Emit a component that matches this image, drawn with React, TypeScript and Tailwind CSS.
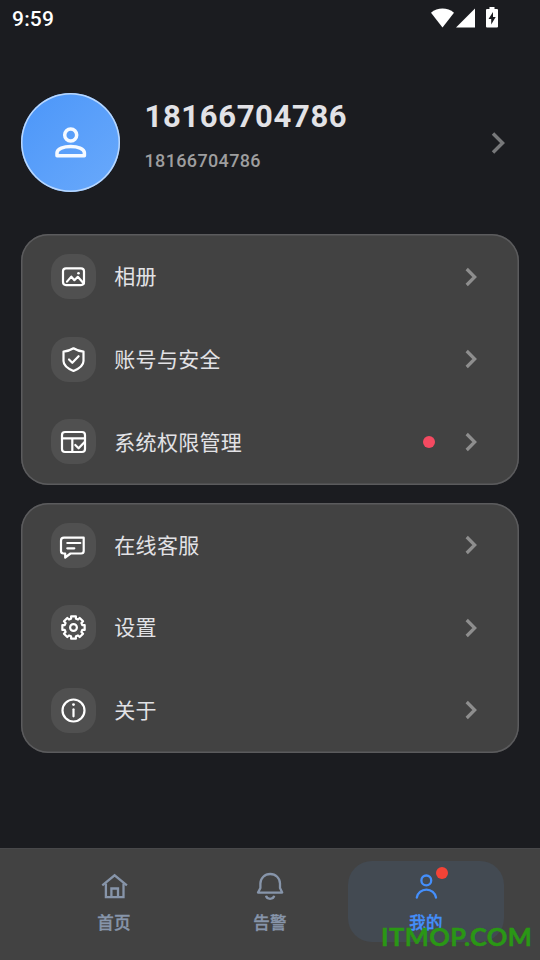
import React from "react";

type MenuItem = {
  label: string;
  icon: React.ReactNode;
  dot?: boolean;
};

type Tab = {
  label: string;
  icon: React.ReactNode;
  active?: boolean;
};

// eight-tooth outline used by the settings icon
const gearPoints = Array.from({ length: 8 })
  .flatMap((_, i) => {
    const a = (i * Math.PI) / 4 - Math.PI / 2;
    return [
      [a - 0.27, 9.1],
      [a - 0.21, 11.4],
      [a + 0.21, 11.4],
      [a + 0.27, 9.1],
    ].map(
      ([t, r]) =>
        `${(22.5 + r * Math.cos(t)).toFixed(2)},${(22.5 + r * Math.sin(t)).toFixed(2)}`
    );
  })
  .join(" ");

const RowIcon = ({ children }: { children: React.ReactNode }) => (
  <svg
    viewBox="0 0 45 45"
    className="size-[45px]"
    fill="none"
    stroke="#fff"
    strokeWidth="2.2"
    strokeLinecap="round"
    strokeLinejoin="round"
  >
    {children}
  </svg>
);

const albumItems: MenuItem[] = [
  {
    label: "相册",
    icon: (
      <RowIcon>
        <rect x="12" y="14.3" width="21" height="16.8" rx="3" />
        <path d="M16 27.6l4.3-5 3.1 3.6 3.4-3.4 6 6.6" />
        <circle cx="27.5" cy="19.2" r="1.3" fill="#fff" stroke="none" />
      </RowIcon>
    ),
  },
  {
    label: "账号与安全",
    icon: (
      <RowIcon>
        <path d="M22.5 11.3c3 1.9 6.2 3 10 3.3v9.4c0 4.5-4.3 7.6-10 10-5.7-2.4-10-5.5-10-10v-9.4c3.8-.3 7-1.4 10-3.3z" />
        <path d="M18 22.5l3.3 3.3 6.3-6.6" />
      </RowIcon>
    ),
  },
  {
    label: "系统权限管理",
    dot: true,
    icon: (
      <RowIcon>
        <rect x="11" y="13" width="23" height="20" rx="3" />
        <path d="M11 19.3h23M21.3 19.3v13.5" />
        <path d="M24.3 26l3.3 3.3 6-6.3" />
      </RowIcon>
    ),
  },
];

const serviceItems: MenuItem[] = [
  {
    label: "在线客服",
    icon: (
      <RowIcon>
        <path d="M13 14.7h19.7v13.3a2.5 2.5 0 0 1-2.5 2.5H19.5L14.2 34.5v-4H12.5a2.5 2.5 0 0 1-2.5-2.5v-10.3a3 3 0 0 1 3-3z" />
        <path d="M16.3 20h13M16.3 25.3h7" />
      </RowIcon>
    ),
  },
  {
    label: "设置",
    icon: (
      <RowIcon>
        <polygon points={gearPoints} />
        <circle cx="22.5" cy="22.5" r="3.4" />
      </RowIcon>
    ),
  },
  {
    label: "关于",
    icon: (
      <RowIcon>
        <circle cx="22.5" cy="22.5" r="11" />
        <path d="M22.5 21.3v7" />
        <circle cx="22.5" cy="16.6" r="1.4" fill="#fff" stroke="none" />
      </RowIcon>
    ),
  },
];

const tabs: Tab[] = [
  {
    label: "首页",
    icon: (
      <>
        <path d="M3.3 14.3L15.6 4.3l12.3 10" />
        <path d="M6.9 12.5v13.7h17.6V12.5" />
        <path d="M12.4 25.8v-8.3h6.6v8.3" />
      </>
    ),
  },
  {
    label: "告警",
    icon: (
      <>
        <path
          d="M3 21.6h24.2l-2.2-4.6V12.5a9.6 9.3 0 0 0-19.6 0v4.5z"
          strokeLinejoin="round"
        />
        <path d="M11 24.8a4.2 3.8 0 0 0 8.2 0" />
      </>
    ),
  },
  {
    label: "我的",
    active: true,
    icon: (
      <>
        <circle cx="15.3" cy="9.4" r="4.9" />
        <path d="M5.8 26.5a9.7 9.3 0 0 1 19.2 0" strokeLinecap="round" />
      </>
    ),
  },
];

const Chevron = () => (
  <svg
    viewBox="0 0 12 20"
    className="h-5 w-3"
    fill="none"
    stroke="#8e8e8e"
    strokeWidth="3.2"
  >
    <path d="M1.7 2l8 8-8 8" />
  </svg>
);

const MenuCard = ({ items }: { items: MenuItem[] }) => (
  <section className="flex h-[250.5px] flex-col justify-between rounded-[27px] bg-[#424242] pt-[20.1px] pr-[42px] pb-[20.2px] pl-[30px] inset-ring-[1.5px] inset-ring-[#5b5b5d]">
    {items.map((item) => (
      <div key={item.label} className="flex h-[45px] items-center">
        <div className="size-[45px] rounded-[18px] bg-[#505050]">{item.icon}</div>
        <span className="mt-[1.5px] ml-[18.3px] flex-1 text-[21px] leading-[30px] tracking-[0.3px] text-[#e2e2e6]">
          {item.label}
        </span>
        {item.dot && <span className="mr-[30px] size-3 rounded-full bg-[#f44a61]" />}
        <Chevron />
      </div>
    ))}
  </section>
);

const StatusBar = () => (
  <header className="flex h-[38px] items-center justify-between pr-[42px] pl-3">
    <span className="text-[21px] leading-6 font-medium tracking-[0.2px] text-white">
      9:59
    </span>
    <svg viewBox="0 0 68 22" className="mb-[3px] h-[22px] w-[68px]" fill="#fff">
      <path d="M12.5 20.5L1 5.8C7.5.2 17.5.2 24 5.8z" />
      <path d="M45 1.5V20.5H26z" />
      <path
        fillRule="evenodd"
        d="M59.5 0h5v2h2.5q1 0 1 1v16.5q0 1-1 1H57q-1 0-1-1V3q0-1 1-1h2.5zM63 5l-4.5 7h2.7v5.5l4.5-7.5H63z"
      />
    </svg>
  </header>
);

const Profile = () => (
  <div className="mt-[55px] flex h-[99px] items-center pr-[35px] pl-[21px]">
    <div className="flex size-[99px] items-center justify-center rounded-full bg-linear-to-br from-[#4b96f9] to-[#69a9fb] inset-ring-[1.5px] inset-ring-[#b9d7fd]">
      <svg
        viewBox="0 0 34 34"
        className="size-[34px]"
        fill="none"
        stroke="#f6faff"
        strokeWidth="3.5"
        strokeLinejoin="round"
      >
        <circle cx="16.7" cy="9" r="6" />
        <path d="M3 29.8v-3c0-4.2 6.9-6.3 13.7-6.3s13.7 2.1 13.7 6.3v3z" />
      </svg>
    </div>
    <div className="mb-[15px] ml-[24.5px] flex-1">
      <h1 className="text-[31px] leading-[38px] font-bold tracking-[0.65px] text-[#e2e2e6]">
        18166704786
      </h1>
      <p className="mt-[13px] text-[18px] leading-6 font-medium tracking-[0.35px] text-[#9e9e9f]">
        18166704786
      </p>
    </div>
    <svg
      viewBox="0 0 14 24"
      className="h-6 w-3.5"
      fill="none"
      stroke="#77787a"
      strokeWidth="3.5"
    >
      <path d="M2 2.5l9.6 9.5L2 21.5" />
    </svg>
  </div>
);

export default function App() {
  return (
    <div className="relative flex h-[960px] w-[540px] flex-col overflow-hidden bg-[#1b1c20] font-[Roboto,'Noto_Sans_CJK_SC',sans-serif]">
      <StatusBar />
      <Profile />
      <main className="mt-[42px] flex flex-col gap-[18px] px-[21px]">
        <MenuCard items={albumItems} />
        <MenuCard items={serviceItems} />
      </main>
      <nav className="mt-auto flex h-[112.5px] border-t border-[#48484a] bg-[#424242] px-9 pt-[12.5px]">
        {tabs.map((tab) => (
          <div
            key={tab.label}
            className={`relative flex h-[81px] flex-1 flex-col items-center rounded-3xl pt-2.5 ${
              tab.active ? "bg-[#434a52] text-[#448ffb]" : "text-[#8795aa]"
            }`}
          >
            <svg
              viewBox="0 0 30 30"
              className="size-[30px]"
              fill="none"
              stroke="currentColor"
              strokeWidth="2.3"
            >
              {tab.icon}
            </svg>
            <span className="mt-[11px] text-[16.5px] leading-6 font-medium tracking-[0.3px] [-webkit-text-stroke:0.35px]">
              {tab.label}
            </span>
            {tab.active && (
              <i className="absolute top-[6px] left-[88.3px] size-3 rounded-full bg-[#f44336]" />
            )}
          </div>
        ))}
      </nav>
      <span className="absolute top-[918px] left-[381px] font-[Lato,sans-serif] text-[25.5px] leading-9 font-bold tracking-[0.4px] text-[#2a9715] [-webkit-text-stroke:0.5px]">
        ITMOP.COM
      </span>
    </div>
  );
}
